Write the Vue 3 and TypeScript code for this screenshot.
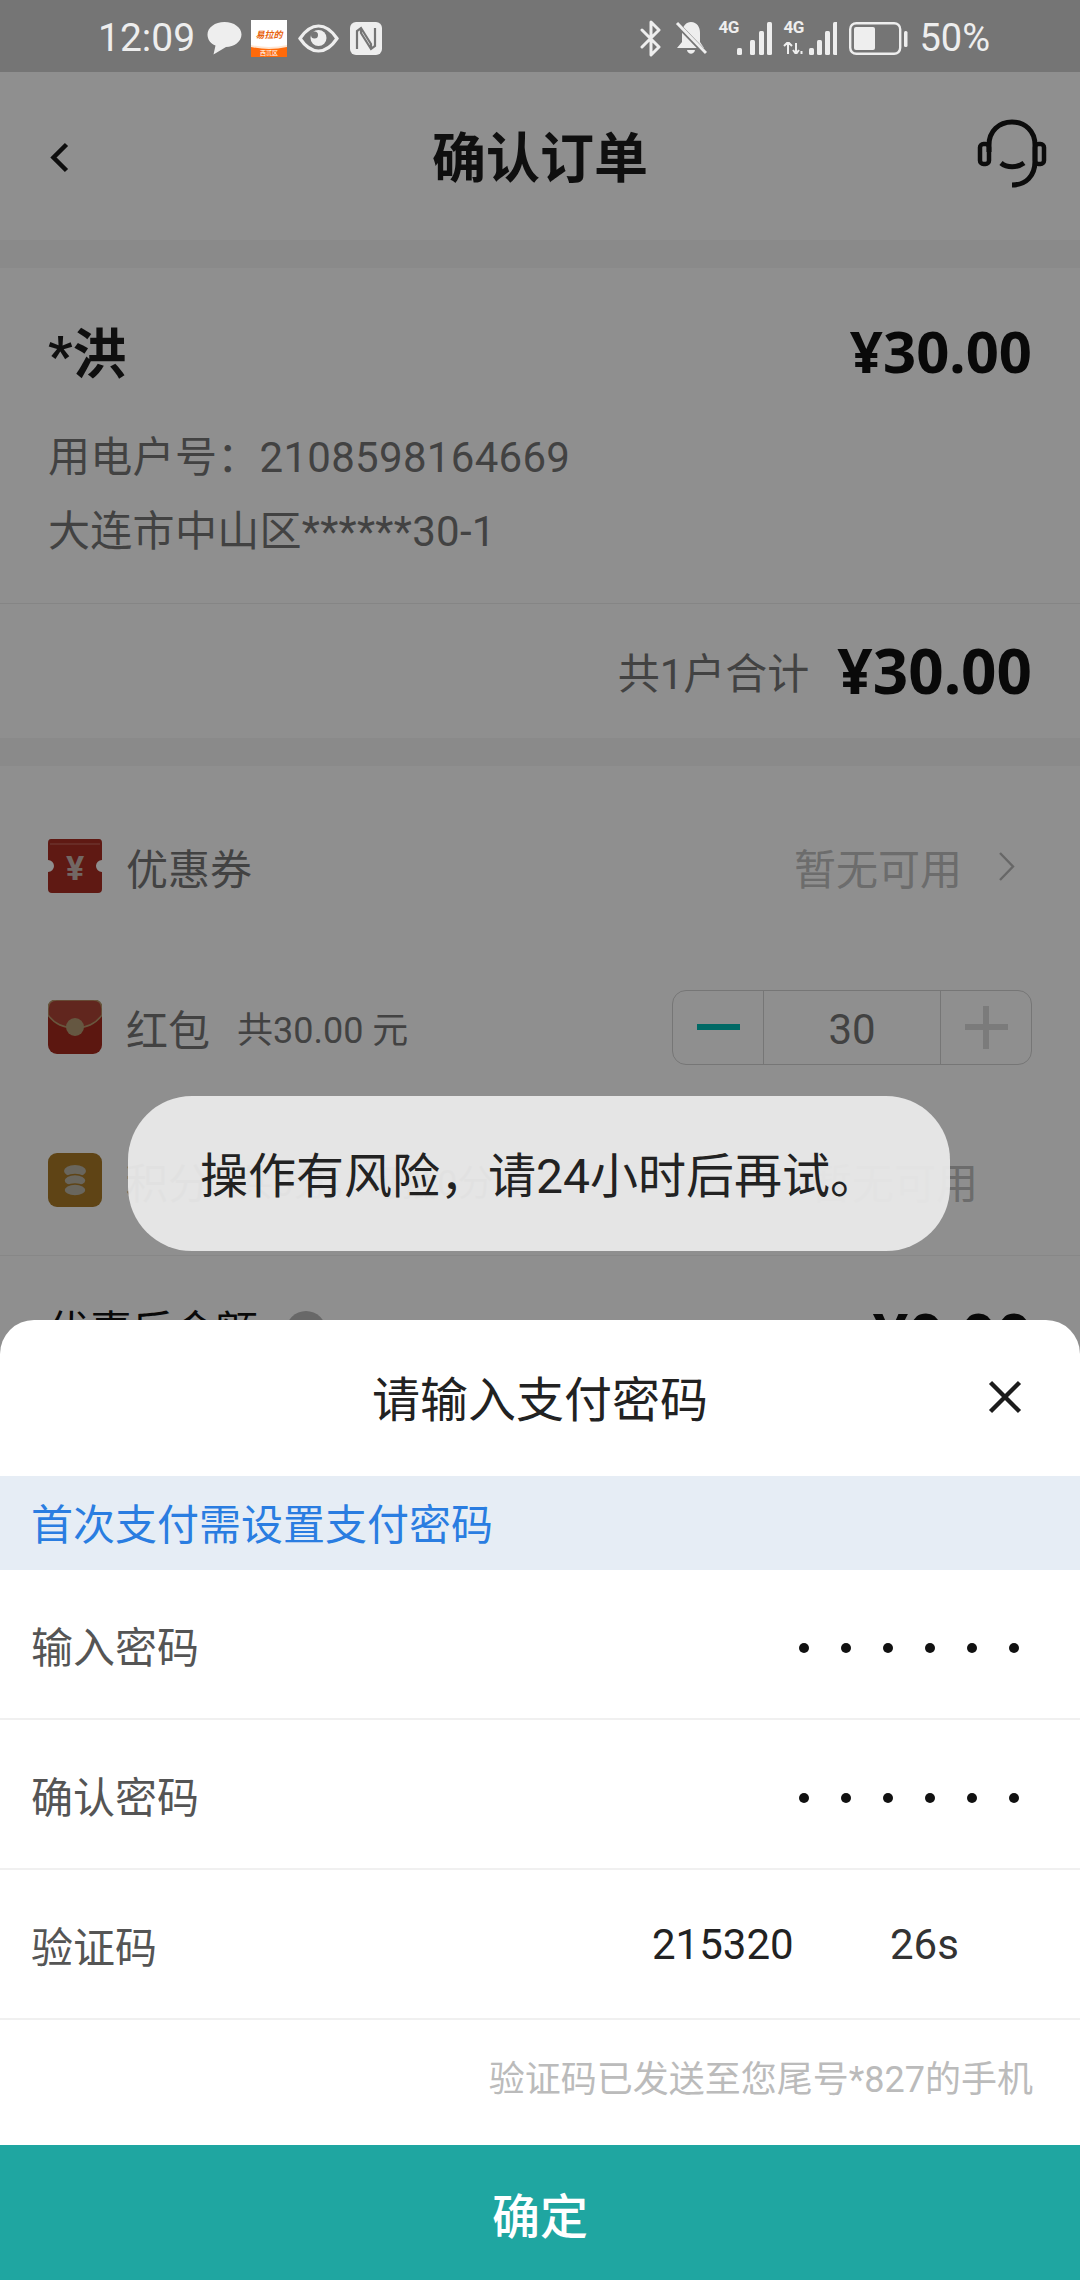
<script setup lang="ts">
const heights = [7, 15, 24, 33]
const barsOne = [19, 32, 41, 49].map((x, i) => ({ x, h: heights[i] }))
const barsTwo = [26, 34, 42, 50].map((x, i) => ({ x, h: heights[i] }))
const pwdRows = ['输入密码', '确认密码']
const dots = [0, 1, 2, 3, 4, 5]
</script>

<template>
  <div class="screen">
    <div class="status">
      <span class="time">12:09</span>
      <svg class="ic-chat" width="35" height="34" viewBox="0 0 35 34"><path d="M17.500 1C27 1 34.500 6.500 34.500 13.500S27 26 19 26L6.500 33.500 8.500 24.500C3.500 22.500 .5 18.500 .5 13.500 .5 6.500 8 1 17.500 1Z" fill="#eee"/></svg>
      <svg class="ic-app" width="36" height="37" viewBox="0 0 36 37">
        <rect width="36" height="37" fill="#fff"/>
        <path d="M0 25Q18 29 36 25V37H0Z" fill="#ffe6d2"/>
        <path d="M0 27Q18 31 36 27V37H0Z" fill="#ff6a0a"/>
        <text x="18" y="18" text-anchor="middle" font-size="9" font-weight="700" font-style="italic" fill="#e8620c" font-family="'Noto Sans CJK SC', sans-serif">易拉的</text>
        <text x="18" y="35" text-anchor="middle" font-size="6" fill="#fff" font-family="'Noto Sans CJK SC', sans-serif">西贰区</text>
      </svg>
      <svg class="ic-eye" width="41" height="29" viewBox="0 0 41 29"><path d="M2 14.500C8 5.500 14 2 20.500 2S33 5.500 39 14.500C33 23.500 27 27 20.500 27S8 23.500 2 14.500Z" fill="none" stroke="#eee" stroke-width="3.200"/><circle cx="20.500" cy="14" r="8" fill="#eee"/><circle cx="16.500" cy="11" r="3.500" fill="#757575"/></svg>
      <svg class="ic-nfc" width="32" height="33" viewBox="0 0 32 33"><rect width="32" height="33" rx="6" fill="#eee"/><path d="M7 27V9L11 6 21 22V27M25 6V24L21 27 11 11V6" fill="none" stroke="#757575" stroke-width="2.200"/></svg>
      <span class="spacer"></span>
      <svg class="ic-bt" width="23" height="37" viewBox="0 0 23 37"><path d="M2 10 19 27 11 35V2L19 10 2 27" fill="none" stroke="#eee" stroke-width="3" stroke-linejoin="round" stroke-linecap="round"/></svg>
      <svg class="ic-bell" width="32" height="36" viewBox="0 0 32 36"><path d="M16 2C22 2 25 7 25 13V22L29 28H2L7 22V11C8 6 11 2 16 2Z" fill="#eee"/><path d="M12 30H20C19 35 13 35 12 30Z" fill="#eee"/><path d="M2 4 31 34" stroke="#757575" stroke-width="5"/><path d="M2 3 31 33" stroke="#eee" stroke-width="3"/></svg>
      <div class="sig">
        <span class="g">4G</span>
        <svg width="54" height="34" viewBox="0 0 54 34"><rect v-for="b in barsOne" :key="b.x" :x="b.x" :y="34 - b.h" width="5" :height="b.h" rx="1.500" fill="#eee"/></svg>
      </div>
      <div class="sig">
        <span class="g">4G</span>
        <svg class="arrows" width="20" height="12" viewBox="0 0 20 12"><path d="M5 0V12M1 4 5 0 9 4M13 12V1M10 8 13 12 16 8M18.500 9V12" fill="none" stroke="#eee" stroke-width="2"/></svg>
        <svg width="54" height="34" viewBox="0 0 54 34"><rect v-for="b in barsTwo" :key="b.x" :x="b.x" :y="34 - b.h" width="5" :height="b.h" rx="1.500" fill="#eee"/></svg>
      </div>
      <svg class="ic-bat" width="59" height="33" viewBox="0 0 59 33"><rect x="1.200" y="1.200" width="50" height="30.600" rx="6" fill="none" stroke="#eee" stroke-width="2.400"/><rect x="5" y="5" width="21" height="23" rx="2" fill="#eee"/><rect x="55" y="9" width="3.500" height="16" rx="1.500" fill="#eee"/></svg>
      <span class="pct">50%</span>
    </div>

    <header class="nav">
      <svg class="back" width="19" height="31" viewBox="0 0 19 31"><path d="M16.500 2.500 3.500 15.500 16.500 28.500" fill="none" stroke="#1a1a1a" stroke-width="4.500"/></svg>
      <h1 class="title">确认订单</h1>
      <svg class="headset" width="70" height="70" viewBox="0 0 70 70" fill="none" stroke="#161616" stroke-width="5">
        <path d="M12 33V26C12 12 22 3 35 3S58 12 58 26V42C58 57 49 66 35 66"/>
        <rect x="3" y="25" width="9" height="20" rx="3.500" stroke-width="4.500"/>
        <rect x="58" y="25" width="9" height="20" rx="3.500" stroke-width="4.500"/>
        <path d="M24 44C30 49 40 49 47 44" stroke-width="5"/>
      </svg>
    </header>

    <section class="card">
      <div class="card-top">
        <div class="row-between">
          <span class="name">*洪</span>
          <span class="amount">¥30.00</span>
        </div>
        <p class="info first">用电户号：2108598164669</p>
        <p class="info">大连市中山区******30-1</p>
      </div>
      <div class="total">
        <span class="total-label">共1户合计</span>
        <span class="amount big">¥30.00</span>
      </div>
    </section>

    <section class="list">
      <div class="item coupon">
        <svg class="ic" width="54" height="54" viewBox="0 0 54 54">
          <path d="M3 0H51Q54 0 54 4V21A6 6 0 0 0 54 33V50Q54 54 50 54H4Q0 54 0 50V33A6 6 0 0 0 0 21V4Q0 0 3 0Z" fill="#a92d23"/>
          <path d="M2 5H52" stroke="#c05a4e" stroke-width="1.500"/>
          <text x="27" y="41" text-anchor="middle" font-size="34" font-weight="700" fill="#cbb9b2" font-family="Roboto, sans-serif">¥</text>
        </svg>
        <span class="label">优惠券</span>
        <span class="spacer"></span>
        <span class="muted">暂无可用</span>
        <svg class="chev" width="17" height="31" viewBox="0 0 17 31"><path d="M2 2 15 15.500 2 29" fill="none" stroke="#b8b8b8" stroke-width="2.400"/></svg>
      </div>
      <div class="item packet">
        <svg class="ic" width="54" height="54" viewBox="0 0 54 54">
          <rect width="54" height="54" rx="9" fill="#a52a1e"/>
          <path d="M0 9Q0 0 9 0H45Q54 0 54 9V15C46 26 36 28 27 28S8 26 0 15Z" fill="#ae4436" stroke="#b99a6e" stroke-width="1.500"/>
          <circle cx="27" cy="27" r="9" fill="#b59c74"/>
        </svg>
        <span class="label">红包</span>
        <span class="sub">共30.00 元</span>
        <span class="spacer"></span>
        <div class="stepper">
          <div class="step minus"><i></i></div>
          <div class="step val">30</div>
          <div class="step plus"><i></i><b></b></div>
        </div>
      </div>
      <div class="item points">
        <svg class="ic" width="54" height="54" viewBox="0 0 54 54">
          <rect width="54" height="54" rx="9" fill="#a97a27"/>
          <ellipse cx="27" cy="18" rx="11" ry="6" fill="#bcb6a6"/>
          <ellipse cx="27" cy="27.500" rx="11" ry="6" fill="#bcb6a6" stroke="#a97a27" stroke-width="1.500"/>
          <ellipse cx="27" cy="37" rx="11" ry="6" fill="#bcb6a6" stroke="#a97a27" stroke-width="1.500"/>
        </svg>
        <span class="label">积分</span>
        <span class="sub">共0分，可抵0分</span>
        <span class="spacer"></span>
        <span class="muted last">暂无可用</span>
      </div>
      <div class="after">
        <span class="after-label">优惠后金额</span>
        <span class="q">?</span>
        <span class="spacer"></span>
        <span class="amount big">¥0.00</span>
      </div>
    </section>

    <div class="dim"></div>

    <div class="toast">操作有风险，请24小时后再试。</div>

    <div class="sheet">
      <div class="sheet-head">
        <span class="sheet-title">请输入支付密码</span>
        <svg class="close" width="34" height="34" viewBox="0 0 34 34"><path d="M2.500 2.500 31.500 31.500M31.500 2.500 2.500 31.500" stroke="#1c1c1c" stroke-width="4.400"/></svg>
      </div>
      <div class="band">首次支付需设置支付密码</div>
      <div v-for="r in pwdRows" :key="r" class="field">
        <span class="f-label">{{ r }}</span>
        <span class="dots"><i v-for="d in dots" :key="d"></i></span>
      </div>
      <div class="field">
        <span class="f-label">验证码</span>
        <span class="code">215320</span>
        <span class="sec">26s</span>
      </div>
      <div class="hint">验证码已发送至您尾号*827的手机</div>
      <div class="confirm">确定</div>
    </div>
  </div>
</template>

<style>
html, body { margin: 0; padding: 0; background: #fff; }
</style>

<style scoped>
.screen {
  position: relative;
  width: 1080px;
  height: 2280px;
  overflow: hidden;
  background: #f6f6f6;
  font-family: Roboto, "Noto Sans CJK SC", sans-serif;
  color: #1c1c1c;
}
.spacer { flex: 1; }
.status {
  position: relative;
  z-index: 3;
  height: 72px;
  background: #757575;
  display: flex;
  align-items: center;
  padding: 4px 90px 0 98px;
  box-sizing: border-box;
  color: #eee;
}
.time { font-size: 39px; width: 109px; }
.ic-app { margin-left: 9px; }
.ic-eye { margin-left: 11px; }
.ic-nfc { margin-left: 11px; }
.ic-bell { margin-left: 12px; }
.sig { position: relative; width: 54px; height: 34px; margin-left: 11px; }
.sig svg { display: block; }
.sig .g { position: absolute; left: 0; top: -3px; font-size: 17px; font-weight: 700; line-height: 18px; letter-spacing: -.5px; }
.sig .arrows { position: absolute; left: 0; top: 21px; }
.ic-bat { margin-left: 12px; }
.pct { font-size: 38px; margin-left: 11px; }
.nav {
  height: 168px;
  background: #fff;
  position: relative;
  display: flex;
  align-items: center;
  justify-content: space-between;
  padding: 0 33px 0 50px;
}
.title {
  position: absolute;
  left: 0;
  right: 0;
  top: 52px;
  margin: 0;
  text-align: center;
  font-size: 54px;
  line-height: 72px;
  font-weight: 700;
}
.back { margin-top: 3px; }
.headset { margin-top: -5px; }
.card {
  margin-top: 28px;
  background: #fff;
  height: 470px;
  display: flex;
  flex-direction: column;
}
.card-top {
  height: 336px;
  padding: 47px 48px 0;
  box-sizing: border-box;
  border-bottom: 1px solid #ededed;
}
.row-between { display: flex; justify-content: space-between; align-items: center; height: 70px; }
.name { font-size: 54px; font-weight: 700; }
.amount { font-size: 58px; font-weight: 700; font-family: "Noto Sans", Roboto, sans-serif; color: #111; }
.amount.big { font-size: 62px; }
.info { margin: 0; font-size: 42px; line-height: 74px; color: #777; letter-spacing: .3px; }
.info.first { margin-top: 36px; }
.total {
  flex: 1;
  display: flex;
  justify-content: flex-end;
  align-items: center;
  padding: 0 48px 2px;
  gap: 28px;
}
.total-label { font-size: 42px; color: #777; }
.list {
  margin-top: 28px;
  background: #fff;
  height: 700px;
  display: flex;
  flex-direction: column;
}
.item { display: flex; align-items: center; padding: 0 48px; }
.coupon { margin-top: 72px; height: 56px; }
.packet { margin-top: 105px; height: 56px; }
.points { margin-top: 97px; height: 56px; }
.label { font-size: 42px; color: #777; margin-left: 24px; }
.sub { font-size: 36px; color: #777; margin-left: 27px; }
.muted { font-size: 42px; color: #c0c0c0; }
.muted.last { margin-right: 54px; }
.chev { margin-left: 36px; margin-right: 17px; }
.stepper {
  display: flex;
  height: 75px;
  width: 360px;
  box-sizing: border-box;
  border: 1px solid #d2d2d2;
  border-radius: 14px;
}
.step { height: 100%; display: flex; align-items: center; justify-content: center; position: relative; }
.minus { width: 90px; border-right: 1px solid #d2d2d2; }
.minus i { width: 43px; height: 6px; background: #00bcb5; }
.val { flex: 1; font-size: 42px; color: #777; padding-top: 4px; box-sizing: border-box; }
.plus { width: 90px; border-left: 1px solid #d2d2d2; }
.plus i { position: absolute; width: 43px; height: 6px; background: #dcdcdc; }
.plus b { position: absolute; width: 6px; height: 43px; background: #dcdcdc; }
.after {
  margin-top: 47px;
  border-top: 1px solid #f0f0f0;
  padding: 0 48px;
  display: flex;
  align-items: center;
  height: 158px;
}
.after-label { font-size: 42px; margin-top: -16px; color: #111; }
.q { width: 40px; height: 40px; border-radius: 50%; background: #bababa; margin: -8px 0 0 28px; color: #fff; text-align: center; line-height: 40px; font-size: 28px; }
.dim { position: absolute; inset: 0; background: rgba(0, 0, 0, .44); z-index: 1; }
.toast {
  position: absolute;
  z-index: 4;
  left: 128px;
  top: 1096px;
  width: 822px;
  height: 155px;
  border-radius: 64px;
  background: rgba(232, 232, 232, .96);
  color: #222;
  font-size: 48px;
  line-height: 162px;
  text-align: center;
}
.sheet {
  position: absolute;
  z-index: 2;
  left: 0;
  right: 0;
  bottom: 0;
  height: 960px;
  background: #fff;
  border-radius: 34px 34px 0 0;
  display: flex;
  flex-direction: column;
}
.sheet > * { flex-shrink: 0; }
.sheet-head { height: 156px; position: relative; display: flex; align-items: center; justify-content: center; padding-bottom: 4px; box-sizing: border-box; }
.sheet-title { font-size: 48px; color: #222; }
.close { position: absolute; left: 988px; top: 60px; }
.band { height: 94px; background: #e6edf5; color: #2a7de1; font-size: 42px; line-height: 100px; padding-left: 31px; }
.field {
  height: 150px;
  box-sizing: border-box;
  border-bottom: 2px solid #f0f0f0;
  display: flex;
  align-items: center;
  padding: 0 60px 0 31px;
}
.f-label { font-size: 42px; color: #555; flex: 1; }
.dots { display: flex; gap: 32px; margin-top: 7px; margin-right: 1px; }
.dots i { width: 10px; height: 10px; border-radius: 50%; background: #111; }
.code { font-size: 42px; color: #222; width: 238px; }
.sec { font-size: 42px; color: #333; width: 130px; }
.hint { height: 125px; text-align: right; font-size: 36px; color: #bbb; padding: 35px 47px 0 0; box-sizing: border-box; line-height: 50px; }
.confirm { height: 135px; background: #1fa6a1; color: #fff; font-size: 48px; font-weight: 500; display: flex; align-items: center; justify-content: center; }
</style>
